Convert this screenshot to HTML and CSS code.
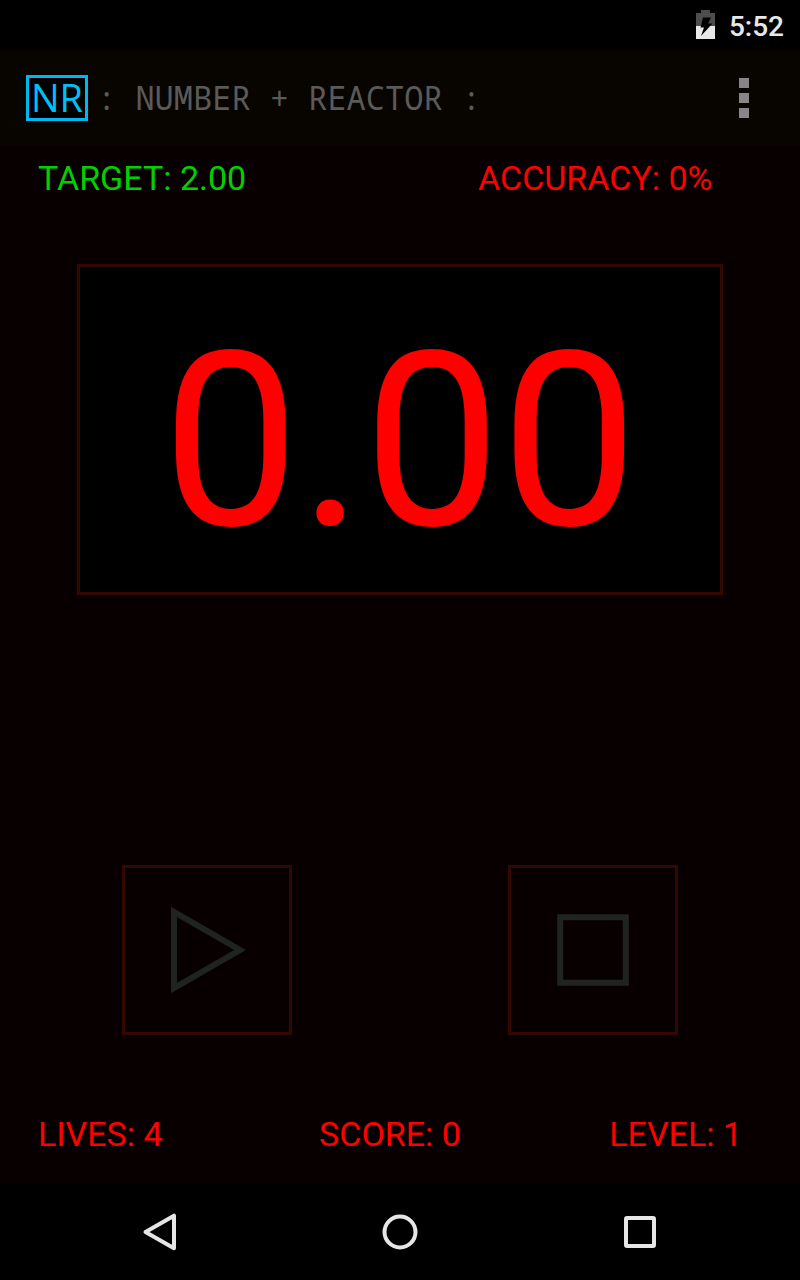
FILE: index.html
```html
<!DOCTYPE html>
<html lang="en">
<head>
<meta charset="utf-8">
<meta name="viewport" content="width=device-width, initial-scale=1">
<title>Number + Reactor</title>
<link rel="stylesheet" href="styles.css">
</head>
<body>
<div class="status-bar">
  <svg class="battery" width="20" height="30" viewBox="0 0 20 30" aria-hidden="true">
    <path class="battery-empty" d="M5 0h9v3h5v13H0V3h5z"/>
    <path class="battery-full" d="M0 16h19v13H0z"/>
    <path class="battery-bolt" d="M7 7.500h8l-3 6h4.500L5 26l3-8.500H4.500z"/>
  </svg>
  <time class="clock">5:52</time>
</div>
<header class="app-bar">
  <span class="logo">NR</span>
  <h1 class="title">: NUMBER + REACTOR :</h1>
  <button class="menu" type="button" aria-label="More options">
    <span class="menu-dot"></span><span class="menu-dot"></span><span class="menu-dot"></span>
  </button>
</header>
<main class="game">
  <div class="goals">
    <span class="stat target">TARGET: 2.00</span>
    <span class="stat">ACCURACY: 0%</span>
  </div>
  <output class="display">0.00</output>
  <div class="controls">
    <button class="control" type="button" aria-label="Play">
      <svg width="164" height="164" viewBox="125 868 164 164" aria-hidden="true"><path class="control-shape" d="M174 912v76l66-38z"/></svg>
    </button>
    <button class="control" type="button" aria-label="Stop">
      <svg width="164" height="164" viewBox="511 868 164 164" aria-hidden="true"><path class="control-shape" d="M560.2 917.2h65.6v65.6h-65.6z"/></svg>
    </button>
  </div>
  <div class="scores">
    <span class="stat">LIVES: 4</span>
    <span class="stat">SCORE: 0</span>
    <span class="stat level">LEVEL: 1</span>
  </div>
</main>
<nav class="nav-bar" aria-label="System">
  <button class="nav-button" type="button" aria-label="Back">
    <svg width="48" height="48" viewBox="0 0 48 48" aria-hidden="true"><path class="nav-shape" d="M38 7.700v32.600L9.500 24z"/></svg>
  </button>
  <button class="nav-button" type="button" aria-label="Home">
    <svg width="48" height="48" viewBox="0 0 48 48" aria-hidden="true"><circle class="nav-shape" cx="24" cy="24" r="15.500"/></svg>
  </button>
  <button class="nav-button" type="button" aria-label="Recent apps">
    <svg width="48" height="48" viewBox="0 0 48 48" aria-hidden="true"><rect class="nav-shape" x="10" y="10" width="28" height="28" rx="1"/></svg>
  </button>
</nav>
</body>
</html>
```
FILE: styles.css
```css
* {
  box-sizing: border-box;
}

body {
  margin: 0;
  min-height: 100vh;
  display: flex;
  flex-direction: column;
  background: #000;
  color: #f00;
  font-family: Roboto, "Liberation Sans", sans-serif;
}

button {
  margin: 0;
  padding: 0;
  border: 0;
  background: none;
  cursor: pointer;
}

svg {
  display: block;
}

.status-bar {
  height: 50px;
  padding: 0 16px;
  display: flex;
  align-items: center;
  justify-content: flex-end;
  gap: 13px;
}

.battery-empty {
  fill: #4d4d4d;
}

.battery-full {
  fill: #e8e8e8;
}

.battery-bolt {
  fill: #000;
}

.clock {
  padding-top: 4px;
  color: #e8e8e8;
  font-size: 28px;
  font-weight: 500;
  line-height: 46px;
}

.app-bar {
  height: 96px;
  padding: 0 32px 0 26px;
  display: flex;
  align-items: center;
  background: #080500;
}

.logo {
  width: 62px;
  height: 46px;
  border: 3px solid #00b8f0;
  background: #000;
  color: #00c0f8;
  font-family: "Open Sans", "Noto Sans", sans-serif;
  font-size: 38px;
  line-height: 39px;
  text-align: center;
}

.title {
  margin: 0 0 0 9px;
  flex: 1;
  color: #5a5a5a;
  font-family: "Droid Sans Mono", "Noto Sans Mono", "DejaVu Sans Mono", monospace;
  font-size: 32px;
  font-weight: 400;
  line-height: 40px;
  white-space: pre;
}

.menu {
  width: 48px;
  height: 64px;
  display: flex;
  flex-direction: column;
  align-items: center;
  justify-content: center;
  gap: 5px;
}

.menu-dot {
  width: 10px;
  height: 10px;
  background: #888488;
}

.game {
  flex: 1;
  padding: 12px 0 30px;
  display: flex;
  flex-direction: column;
  background: #080000;
}

.stat {
  font-size: 34px;
  line-height: 40px;
  white-space: nowrap;
}

.goals {
  padding: 0 38px;
  display: grid;
  grid-template-columns: 440px 1fr;
}

.target {
  color: #00d000;
}

.display {
  margin: 66px 77px 0;
  padding: 35px 0 9px;
  border: 3px solid #330800;
  background: #000;
  font-size: 244px;
  line-height: 281px;
  text-align: center;
}

.controls {
  margin-top: auto;
  padding: 0 122px;
  display: flex;
  justify-content: space-between;
}

.control {
  border: 3px solid #330800;
}

.control-shape {
  fill: none;
  stroke: #202420;
  stroke-width: 6;
}

.scores {
  margin-top: 79px;
  padding: 0 58px 0 38px;
  display: grid;
  grid-template-columns: 1fr auto 1fr;
}

.level {
  text-align: right;
}

.nav-bar {
  height: 96px;
  padding: 0 40px;
  display: grid;
  grid-template-columns: repeat(3, 1fr);
}

.nav-button {
  display: flex;
  align-items: center;
  justify-content: center;
}

.nav-shape {
  fill: none;
  stroke: #e6e6e6;
  stroke-width: 4;
  stroke-linejoin: round;
}
```
